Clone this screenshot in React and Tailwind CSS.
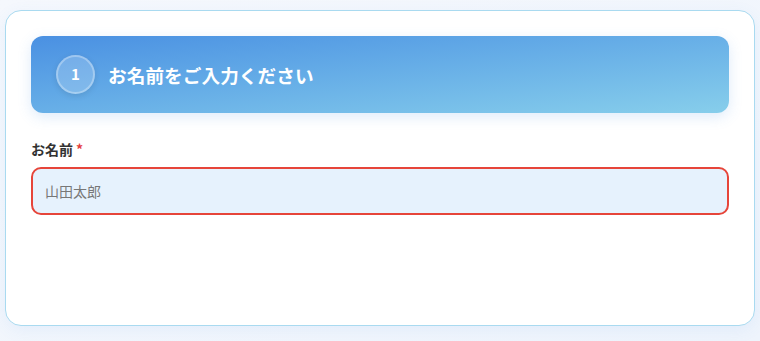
import React from "react"

export default function App() {
  return (
    <div
      className="min-h-screen w-full bg-gradient-to-br from-[#f5f8fd] to-[#eef4fc] px-[5px] pt-[10px] pb-[15px]"
      style={{ fontFamily: '"Noto Sans CJK JP", "Noto Sans", sans-serif' }}
    >
      <div className="h-[316px] rounded-[16px] border border-[#a9daf0] bg-white px-[25px] pt-[25px] shadow-[0_4px_16px_rgba(74,144,226,0.08)]">
        {/* Section header */}
        <div className="flex h-[77px] items-center gap-[13px] rounded-[12px] bg-gradient-to-br from-[#4a90e2] to-[#87ceeb] px-[25px] shadow-[0_4px_14px_rgba(74,144,226,0.18)]">
          <div className="flex h-[39px] w-[39px] items-center justify-center rounded-full border-2 border-white/30 bg-white/20 text-[15px] font-bold text-white shadow-[0_2px_6px_rgba(0,0,0,0.1)]">
            1
          </div>
          <h2 className="text-[18.6px] font-bold tracking-[0.1px] text-white">
            お名前をご入力ください
          </h2>
        </div>

        {/* Field */}
        <div className="mt-[26px]">
          <label className="mb-[7px] block text-[14px] font-bold text-[#333]">
            お名前<span className="ml-[3px] text-[#e53e3e]">*</span>
          </label>
          <input
            type="text"
            placeholder="山田太郎"
            className="h-[48px] w-full rounded-[10px] border-2 border-[#e6453a] bg-[#e6f2fd] px-[12px] text-[14px] text-[#333] outline-none placeholder:text-[#777]"
          />
        </div>
      </div>
    </div>
  )
}
